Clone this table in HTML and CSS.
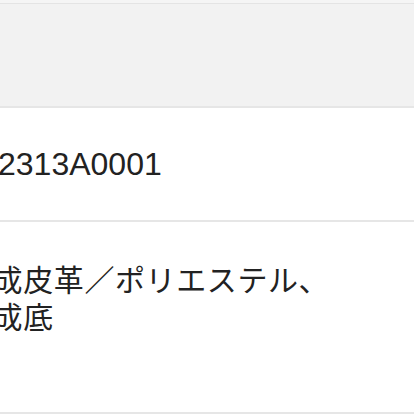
FILE: index.html
```html
<!DOCTYPE html>
<html lang="ja">
<head>
<meta charset="utf-8">
<link rel="stylesheet" href="styles.css">
</head>
<body>
<div class="page">
  <div class="table">
    <div class="row head">
      <div class="label"></div>
      <div class="value"></div>
    </div>
    <div class="row code">
      <div class="label">品番</div>
      <div class="value">2313A0001</div>
    </div>
    <div class="row material">
      <div class="label">素材</div>
      <div class="value">合成皮革／ポリエステル、<br>合成底</div>
    </div>
  </div>
</div>
</body>
</html>
```
FILE: styles.css
```css
html, body {
  margin: 0;
  padding: 0;
  background: #ffffff;
}
.page {
  width: 414px;
  height: 414px;
  overflow: hidden;
  background: #ffffff;
  padding-top: 3px;
  box-sizing: border-box;
  position: relative;
}
.page::before {
  content: "";
  position: absolute;
  left: 0;
  top: 0;
  width: 100%;
  height: 3px;
  background: #f5f5f5;
}
.table {
  margin-left: -66px;
  width: 480px;
  border-top: 1px solid #e4e4e4;
  font-family: "Liberation Sans", "Noto Sans CJK JP", sans-serif;
  color: #222222;
}
.row {
  display: grid;
  grid-template-columns: 60px 1fr;
  border-bottom: 2px solid #e6e6e6;
}
.label {
  visibility: hidden;
}
.head {
  height: 102px;
  background: #f2f2f2;
}
.code {
  height: 112px;
  align-items: center;
}
.code .value {
  font-size: 32px;
  line-height: 36px;
  padding-left: 4px;
}
.material {
  height: 190px;
  align-items: start;
}
.material .value {
  font-family: "Noto Sans CJK JP", sans-serif;
  font-size: 30px;
  line-height: 37px;
  padding-top: 38px;
  letter-spacing: 0.6px;
  margin-left: -32px;
}
```
